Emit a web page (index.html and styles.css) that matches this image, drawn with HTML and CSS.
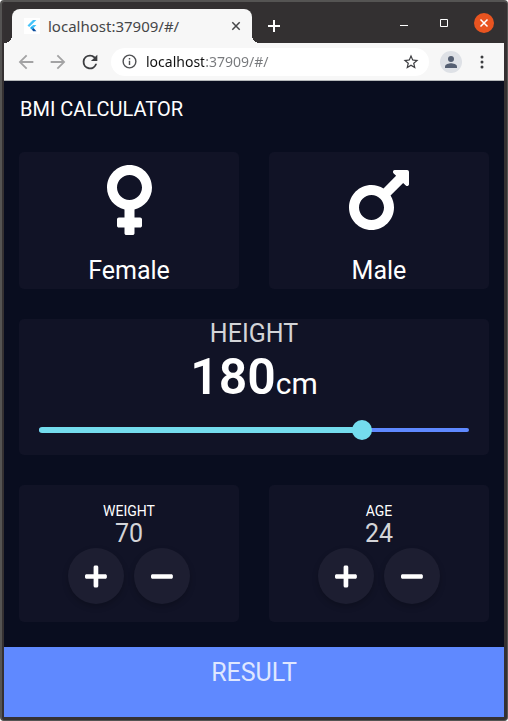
FILE: index.html
```
<!DOCTYPE html>
<html lang="en">
<head>
<meta charset="utf-8">
<meta name="viewport" content="width=device-width, initial-scale=1">
<title>BMI Calculator</title>
<link rel="stylesheet" href="styles.css">
</head>
<body>
<div class="window">
  <header class="titlebar">
    <div class="tab">
      <svg class="favicon" viewBox="0 0 16 16" aria-hidden="true"><rect width="16" height="16" fill="#fff"/><path d="M9 2h3.4L5.2 9.1 3.5 7.4z" fill="#45c4fa"/><path d="M9 7.1h3.4L9.6 9.9 7.9 11.6 6.2 9.9z" fill="#45c4fa"/><path d="M7.9 11.6l1.7-1.7 2.8 3.3H9.2z" fill="#0a4a9c"/><path d="M6.2 9.9l1.7-1.6 1.7 1.6-1.7 1.7z" fill="#1fa8ef"/></svg>
      <span class="tab-title">localhost:37909/#/</span>
      <button class="tab-close" aria-label="Close tab"><svg viewBox="0 0 10 10"><path d="M1.3 1.3l7.4 7.4M8.7 1.3L1.3 8.7"/></svg></button>
    </div>
    <button class="new-tab" aria-label="New tab"><svg viewBox="0 0 12 12"><path d="M6 0v12M0 6h12"/></svg></button>
    <div class="window-controls">
      <button aria-label="Minimize"><svg viewBox="0 0 20 20"><path d="M6 12.5h8"/></svg></button>
      <button aria-label="Maximize"><svg viewBox="0 0 20 20"><path d="M6.5 6.5h7v7h-7z"/></svg></button>
      <button class="close" aria-label="Close"><svg viewBox="0 0 20 20"><path d="M6.5 6.5l7 7M13.5 6.5l-7 7"/></svg></button>
    </div>
  </header>
  <nav class="toolbar">
    <button class="nav-button muted" aria-label="Back"><svg viewBox="0 0 24 24"><path d="M20 11H7.83l5.59-5.59L12 4l-8 8 8 8 1.41-1.41L7.83 13H20z"/></svg></button>
    <button class="nav-button muted" aria-label="Forward"><svg viewBox="0 0 24 24"><path d="M4 13h12.17l-5.59 5.59L12 20l8-8-8-8-1.41 1.41L16.17 11H4z"/></svg></button>
    <button class="nav-button" aria-label="Reload"><svg viewBox="0 0 24 24"><path d="M17.65 6.35A7.96 7.96 0 0 0 12 4a8 8 0 1 0 7.73 10h-2.08A6 6 0 1 1 12 6c1.66 0 3.14.69 4.22 1.78L13 11h7V4z"/></svg></button>
    <div class="address">
      <svg class="info" viewBox="0 0 24 24" aria-hidden="true"><path d="M11 17h2v-6h-2zm1-15a10 10 0 1 0 0 20 10 10 0 0 0 0-20zm0 18a8 8 0 1 1 0-16 8 8 0 0 1 0 16zM11 9h2V7h-2z"/></svg>
      <input class="url" type="text" aria-label="Address" value="localhost:37909/#/">
      <button class="star" aria-label="Bookmark"><svg viewBox="0 0 24 24"><path d="M22 9.24l-7.19-.62L12 2 9.19 8.63 2 9.24l5.46 4.73L5.82 21 12 17.27 18.18 21l-1.63-7.03zM12 15.4l-3.76 2.27 1-4.28-3.32-2.88 4.38-.38L12 6.1l1.71 4.04 4.38.38-3.32 2.88 1 4.28z"/></svg></button>
    </div>
    <button class="profile" aria-label="Profile"><svg viewBox="0 0 22 22"><circle cx="11" cy="8" r="3"/><path d="M5 17v-1.5C5 13.3 9 12.2 11 12.2s6 1.100 6 3.300V17z"/></svg></button>
    <button class="menu" aria-label="Menu"><svg viewBox="0 0 4 14"><circle cx="2" cy="2" r="1.500"/><circle cx="2" cy="7" r="1.500"/><circle cx="2" cy="12" r="1.500"/></svg></button>
  </nav>
  <main class="app">
    <h1 class="app-bar">BMI CALCULATOR</h1>
    <div class="cards">
      <button class="card gender">
        <svg viewBox="0 0 288 512" aria-hidden="true"><path d="M288 176c0-79.500-64.500-144-144-144S0 96.500 0 176c0 68.500 47.900 125.900 112 140.400V368H76c-6.600 0-12 5.400-12 12v40c0 6.600 5.400 12 12 12h36v36c0 6.600 5.400 12 12 12h40c6.600 0 12-5.400 12-12v-36h36c6.600 0 12-5.400 12-12v-40c0-6.600-5.400-12-12-12h-36v-51.600c64.100-14.600 112-71.900 112-140.400zm-224 0c0-44.100 35.900-80 80-80s80 35.900 80 80-35.900 80-80 80-80-35.900-80-80z"/></svg>
        <span>Female</span>
      </button>
      <button class="card gender">
        <svg viewBox="0 0 384 512" aria-hidden="true"><path d="M372 64h-79c-10.700 0-16 12.900-8.500 20.500l16.900 16.900-80.700 80.700C198.500 167.900 172.200 160 144 160 64.500 160 0 224.500 0 304s64.500 144 144 144 144-64.500 144-144c0-28.200-7.900-54.500-22.100-76.700l80.700-80.700 16.900 16.900c7.600 7.600 20.500 2.200 20.500-8.500V76c0-6.600-5.400-12-12-12zM144 384c-44.100 0-80-35.900-80-80s35.900-80 80-80 80 35.900 80 80-35.900 80-80 80z"/></svg>
        <span>Male</span>
      </button>
      <section class="card height">
        <label class="label" for="height">HEIGHT</label>
        <p class="reading"><strong>180</strong><span>cm</span></p>
        <div class="slider">
          <div class="track"></div>
          <div class="fill" style="width: 75%"></div>
          <input id="height" type="range" min="120" max="200" value="180">
        </div>
      </section>
      <section class="card counter">
        <h2>WEIGHT</h2>
        <p class="label">70</p>
        <div class="steps">
          <button aria-label="Increase weight"><svg viewBox="0 0 448 512"><path d="M416 208H272V64c0-17.670-14.330-32-32-32h-32c-17.670 0-32 14.330-32 32v144H32c-17.670 0-32 14.330-32 32v32c0 17.670 14.330 32 32 32h144v144c0 17.670 14.330 32 32 32h32c17.670 0 32-14.330 32-32V304h144c17.670 0 32-14.330 32-32v-32c0-17.670-14.330-32-32-32z"/></svg></button>
          <button aria-label="Decrease weight"><svg viewBox="0 0 448 512"><path d="M416 208H32c-17.670 0-32 14.330-32 32v32c0 17.670 14.330 32 32 32h384c17.670 0 32-14.330 32-32v-32c0-17.670-14.330-32-32-32z"/></svg></button>
        </div>
      </section>
      <section class="card counter">
        <h2>AGE</h2>
        <p class="label">24</p>
        <div class="steps">
          <button aria-label="Increase age"><svg viewBox="0 0 448 512"><path d="M416 208H272V64c0-17.670-14.330-32-32-32h-32c-17.670 0-32 14.330-32 32v144H32c-17.670 0-32 14.330-32 32v32c0 17.670 14.330 32 32 32h144v144c0 17.670 14.330 32 32 32h32c17.670 0 32-14.330 32-32V304h144c17.670 0 32-14.330 32-32v-32c0-17.670-14.330-32-32-32z"/></svg></button>
          <button aria-label="Decrease age"><svg viewBox="0 0 448 512"><path d="M416 208H32c-17.670 0-32 14.330-32 32v32c0 17.670 14.330 32 32 32h384c17.670 0 32-14.330 32-32v-32c0-17.670-14.330-32-32-32z"/></svg></button>
        </div>
      </section>
    </div>
    <button class="result">RESULT</button>
  </main>
</div>
</body>
</html>
```
FILE: styles.css
```
* { box-sizing: border-box; }

body {
  margin: 0;
  background: #fff;
  color: #fff;
  font-family: Roboto, sans-serif;
}

button {
  padding: 0;
  border: 0;
  background: none;
  color: inherit;
  font: inherit;
}

svg { display: block; fill: currentColor; }
h1, h2, p { margin: 0; }

.window {
  display: flex;
  flex-direction: column;
  min-height: 100vh;
  border: solid #555453;
  border-width: 2px 1px 1px 2px;
  border-radius: 4px;
  padding: 0 3px 3px 2px;
  background: #353132;
}

/* Browser chrome */
.titlebar {
  display: flex;
  align-items: center;
  height: 41px;
  background: #333031;
}

.tab {
  position: relative;
  display: flex;
  align-items: center;
  align-self: flex-end;
  width: 240px;
  height: 34px;
  margin-left: 8px;
  padding: 0 11px 0 12px;
  border-radius: 8px 8px 0 0;
  background: #f7f7f7;
  color: #454648;
  font: 15px/20px "Noto Sans", sans-serif;
}

.tab::before,
.tab::after {
  content: "";
  position: absolute;
  bottom: 0;
  width: 8px;
  height: 8px;
}

.tab::before {
  right: 100%;
  background: radial-gradient(circle at 0 0, transparent 8px, #f7f7f7 8px);
}

.tab::after {
  left: 100%;
  background: radial-gradient(circle at 100% 0, transparent 8px, #f7f7f7 8px);
}

.favicon { width: 16px; height: 16px; }
.tab-title { flex: 1; margin-left: 8px; }

.tab-close svg {
  width: 10px;
  height: 10px;
  stroke: #454648;
  stroke-width: 1.5;
}

.new-tab { margin: 6px 0 0 16px; }

.new-tab svg {
  width: 12px;
  height: 12px;
  stroke: #fff;
  stroke-width: 2;
}

.window-controls {
  display: flex;
  gap: 20px;
  margin-left: auto;
  padding-right: 10px;
}

.window-controls svg {
  width: 20px;
  height: 20px;
  fill: none;
  stroke: #fff;
}

.close { border-radius: 50%; background: #e95420; }
.close svg { stroke-width: 1.5; }

.toolbar {
  display: flex;
  align-items: center;
  height: 38px;
  padding: 0 12px 0 11px;
  border-bottom: 1px solid #b6b9bb;
  background: #f7f7f7;
  color: #3c3d40;
}

.nav-button { margin-right: 10px; }
.nav-button svg { width: 22px; height: 22px; }
.muted { color: #a3a3a4; }

.address {
  display: flex;
  flex: 1;
  align-items: center;
  min-width: 0;
  height: 28px;
  padding: 0 9px 0 10px;
  border-radius: 14px;
  background: #fff;
}

.info { width: 17px; height: 17px; color: #505154; }

.url {
  flex: 1;
  min-width: 0;
  margin-left: 8px;
  padding: 0;
  border: 0;
  background: linear-gradient(90deg, #111 58px, #77797c 58px);
  background-clip: text;
  -webkit-background-clip: text;
  color: transparent;
  font: 14px/20px "Noto Sans", sans-serif;
}

.star svg { width: 18px; height: 18px; }

.profile {
  margin: 0 18px 0 11px;
  border-radius: 50%;
  background: #dee1e6;
  color: #555f72;
}

.profile svg { width: 22px; height: 22px; }
.menu { margin-right: 8px; }
.menu svg { width: 4px; height: 14px; }

/* Calculator */
.app {
  display: flex;
  flex: 1;
  flex-direction: column;
  background: #090d1f;
}

.app-bar {
  padding: 0 16px;
  font-size: 20px;
  font-weight: 400;
  line-height: 56px;
}

.cards {
  display: grid;
  flex: 1;
  grid-template-columns: 1fr 1fr;
  grid-auto-rows: minmax(0, 1fr);
  gap: 30px;
  padding: 15px;
}

.card {
  display: flex;
  flex-direction: column;
  align-items: center;
  border-radius: 5px;
  background: #111326;
}

.gender {
  padding-top: 8px;
  font-size: 25px;
  line-height: 30px;
}

.gender svg { height: 80px; margin-bottom: 16px; }

.height { grid-column: 1 / -1; }

.label {
  color: #d3d4d8;
  font-size: 25px;
  line-height: 29px;
}

.reading { display: flex; align-items: baseline; }
.reading strong { font-size: 50px; font-weight: 600; line-height: 58px; }
.reading span { font-size: 30px; line-height: 30px; }

.slider {
  display: grid;
  align-self: stretch;
  align-items: center;
  margin: 0 20px;
  height: 49px;
}

.slider > * { grid-area: 1 / 1; }
.track { height: 4px; border-radius: 2px; background: #5f89ff; }
.fill { height: 6px; border-radius: 3px; background: #74dcee; }

/* The thumb's centre travels the full length of the track. */
.slider input {
  height: 20px;
  margin: 0 -10px;
  appearance: none;
  background: none;
}

.slider input::-webkit-slider-thumb {
  width: 20px;
  height: 20px;
  appearance: none;
  border-radius: 50%;
  background: #74dcee;
}

.counter { justify-content: center; }

.counter h2 {
  font-size: 14px;
  font-weight: 400;
  line-height: 16px;
}

.steps { display: flex; gap: 10px; }

.steps button {
  display: grid;
  place-items: center;
  width: 56px;
  height: 56px;
  border-radius: 50%;
  background: #1d1e31;
  box-shadow: 0 3px 6px rgb(0 0 0 / 20%);
}

.steps svg { height: 25px; }

.result {
  height: 70px;
  margin-top: 10px;
  padding-bottom: 20px;
  background: #5f89ff;
  color: #dfe7ff;
  font-size: 25px;
  line-height: 29px;
}
```
